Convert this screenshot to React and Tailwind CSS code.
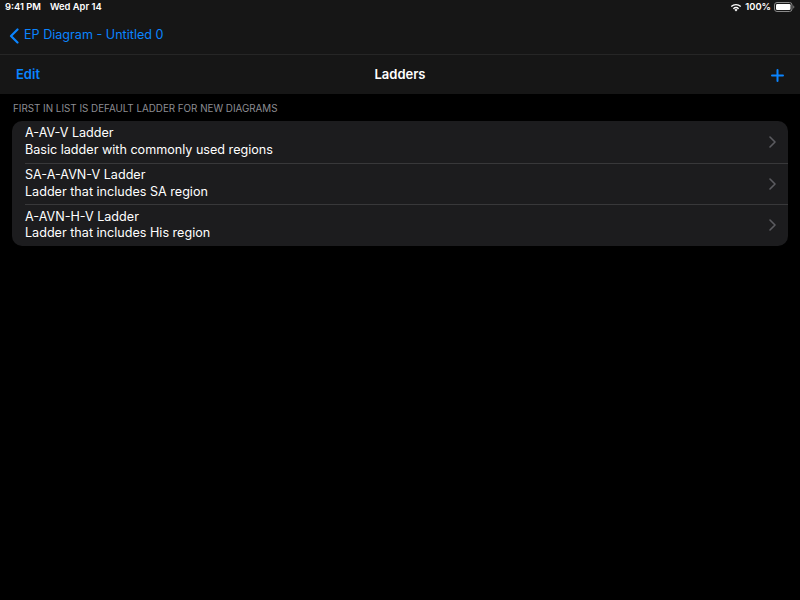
import React from 'react';

const ladders = [
  { name: 'A-AV-V Ladder', description: 'Basic ladder with commonly used regions' },
  { name: 'SA-A-AVN-V Ladder', description: 'Ladder that includes SA region' },
  { name: 'A-AVN-H-V Ladder', description: 'Ladder that includes His region' },
];

const Chevron = () => (
  <svg width="7" height="12" viewBox="0 0 7 12" fill="none">
    <path d="M1 1l5 5-5 5" stroke="#5b5b60" strokeWidth="1.6" strokeLinecap="round" strokeLinejoin="round" />
  </svg>
);

const App = () => {
  return (
    <div className="w-[800px] h-[600px] bg-black text-white overflow-hidden" style={{ fontFamily: 'Inter, "Liberation Sans", sans-serif' }}>
      {/* Top bar */}
      <div className="bg-[#161616]">
        {/* Status bar */}
        <div className="h-[14px] flex items-center justify-between px-[5px] text-[9.4px] font-semibold">
          <div className="flex gap-[9px]">
            <span>9:41 PM</span>
            <span>Wed Apr 14</span>
          </div>
          <div className="flex items-center gap-[3px]">
            <svg width="12" height="9" viewBox="0 0 12 9">
              <path d="M6 8.5l1.6-1.8a2.4 2.4 0 0 0-3.2 0z" fill="white" />
              <path d="M2.9 5.3a4.5 4.5 0 0 1 6.2 0l-0.9 1a3.2 3.2 0 0 0-4.4 0z" fill="white" />
              <path d="M0.8 3.1a7.6 7.6 0 0 1 10.4 0l-0.9 1a6.2 6.2 0 0 0-8.6 0z" fill="white" />
            </svg>
            <span>100%</span>
            <svg width="21" height="10" viewBox="0 0 21 10">
              <rect x="0.5" y="0.5" width="17.5" height="9" rx="2.5" stroke="#8a8a8a" fill="none" />
              <rect x="2" y="2" width="14.5" height="6" rx="1.2" fill="white" />
              <path d="M19.3 3.5v3a1.6 1.6 0 0 0 0-3z" fill="#8a8a8a" />
            </svg>
          </div>
        </div>
        {/* Back row */}
        <div className="h-[41px] pt-[3px] flex items-center pl-[9px] text-[#0a84ff] border-b border-[#262626]">
          <svg width="11" height="16" viewBox="0 0 11 16" fill="none">
            <path d="M8.5 1.5L2 8l6.5 6.5" stroke="#0a84ff" strokeWidth="2.2" strokeLinecap="round" strokeLinejoin="round" />
          </svg>
          <span className="ml-[4px] text-[12.6px]">EP Diagram - Untitled 0</span>
        </div>
        {/* Nav bar */}
        <div className="h-[39px] pt-[1px] flex items-center justify-between px-[16px] relative">
          <span className="text-[13px] font-semibold text-[#0a84ff]">Edit</span>
          <span className="absolute left-1/2 -translate-x-1/2 text-[13px] font-semibold">Ladders</span>
          <svg width="13" height="13" viewBox="0 0 13 13">
            <path d="M6.5 1v11M1 6.5h11" stroke="#0a84ff" strokeWidth="2" strokeLinecap="round" />
          </svg>
        </div>
      </div>

      {/* Content */}
      <div className="px-[12px]">
        <div className="pt-[9px] pb-[6px] px-[1px] text-[9.8px] leading-[12px] text-[#8d8d93] uppercase">
          First in list is default ladder for new diagrams
        </div>
        <div className="bg-[#1c1c1e] rounded-[10px] overflow-hidden">
          {ladders.map((ladder, i) => (
            <div key={ladder.name} className="flex items-center pl-[13px]">
              <div className={`flex-1 flex items-center h-[41.5px] pr-[12px] ${i > 0 ? 'border-t border-[#38383a]' : ''}`}>
                <div className="flex-1 flex flex-col leading-[16.5px] text-[12.6px]">
                  <span>{ladder.name}</span>
                  <span>{ladder.description}</span>
                </div>
                <Chevron />
              </div>
            </div>
          ))}
        </div>
      </div>
    </div>
  );
};

export default App;
